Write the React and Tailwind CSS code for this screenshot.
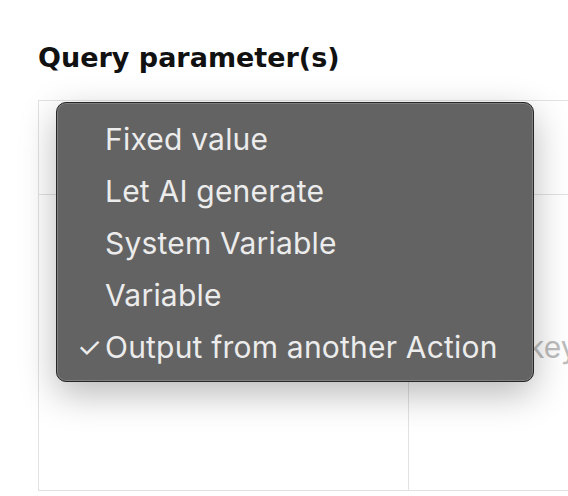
export default function App() {
  const options = [
    { label: 'Fixed value' },
    { label: 'Let AI generate' },
    { label: 'System Variable' },
    { label: 'Variable' },
    { label: 'Output from another Action', checked: true },
  ]

  return (
    <div className="w-[568px] h-[496px] bg-white overflow-hidden relative" style={{ fontFamily: 'Inter, "Noto Sans", sans-serif' }}>
      {/* Heading */}
      <div className="pl-[38px] pt-[41px] h-[100px]">
        <h2 className="text-[27px] leading-[34px] font-bold text-[#111]" style={{ fontFamily: '"DejaVu Sans", "Noto Sans", sans-serif' }}>
          Query parameter(s)
        </h2>
      </div>

      {/* Table */}
      <div className="ml-[38px] w-[560px] border border-[#e2e2e2] flex flex-col">
        <div className="h-[94px] border-b border-[#e2e2e2]" />
        <div className="h-[295px] flex">
          <div className="w-[370px] border-r border-[#e2e2e2]" />
          <div className="flex-1 pt-[130px] pl-[119px]">
            <span className="text-[30px] text-[#bdbdbd] whitespace-nowrap">key</span>
          </div>
        </div>
      </div>

      {/* Dropdown menu */}
      <div className="absolute left-[56px] top-[102px] w-[478px] h-[280px] rounded-[10px] bg-[#636363] border border-[#262626] shadow-[0_12px_36px_rgba(0,0,0,0.28),inset_0_0_0_1px_rgba(255,255,255,0.18)] pt-[10px]">
        {options.map(o => (
          <div key={o.label} className="h-[52px] flex items-center text-[30px] tracking-[0.2px] text-[#ececec] whitespace-nowrap">
            <span className="w-[48px] pl-[20px] text-[28px] font-normal">{o.checked ? '✓' : ''}</span>
            <span>{o.label}</span>
          </div>
        ))}
      </div>
    </div>
  )
}
